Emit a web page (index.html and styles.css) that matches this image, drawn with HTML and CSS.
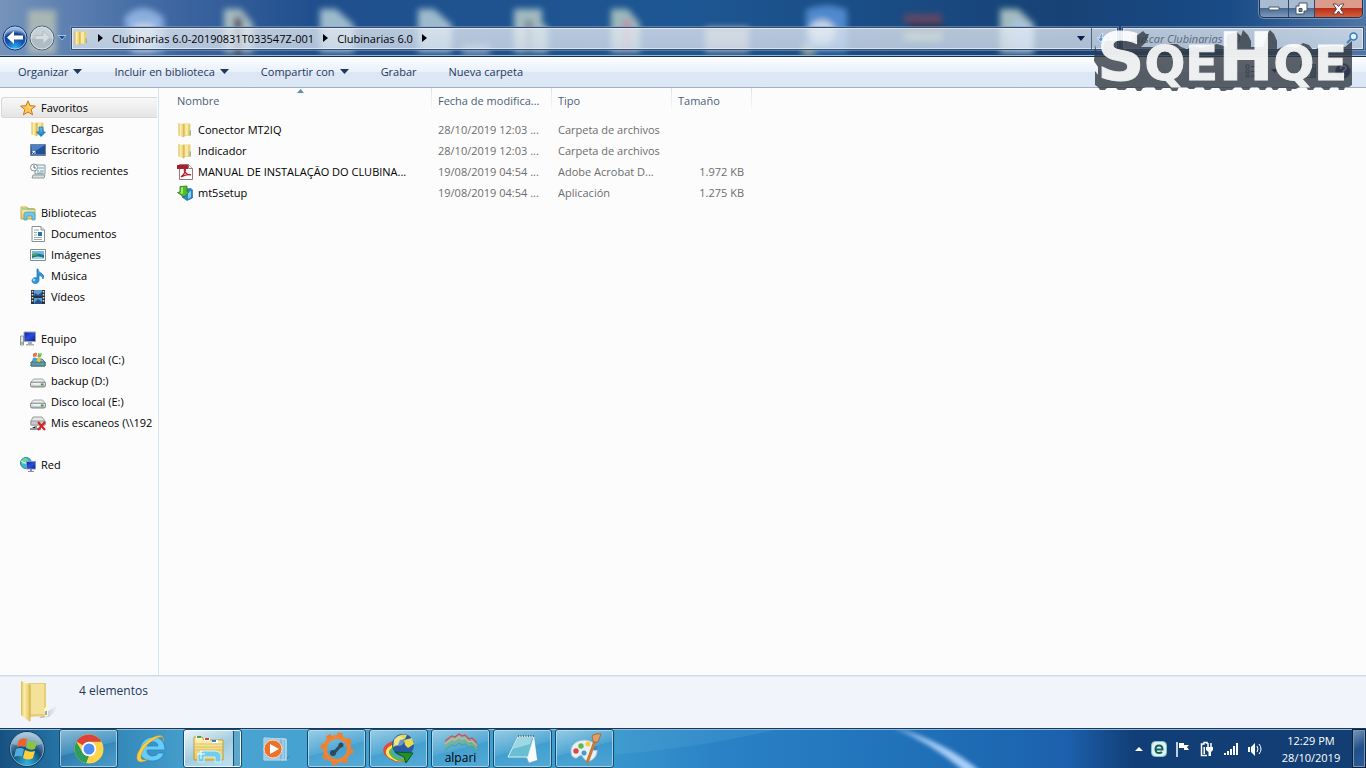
FILE: index.html
```html
<!DOCTYPE html>
<html lang="es">
<head>
<meta charset="utf-8">
<title>Clubinarias 6.0</title>
<link rel="stylesheet" href="styles.css">
</head>
<body>
<svg class="defs" aria-hidden="true">
  <defs>
    <linearGradient id="gold" x1="0" x2="1"><stop offset="0" stop-color="#d9b74c"/><stop offset=".35" stop-color="#fbefb0"/><stop offset="1" stop-color="#e3c457"/></linearGradient>
    <linearGradient id="goldback" x1="0" x2="0" y1="0" y2="1"><stop offset="0" stop-color="#fff3b8"/><stop offset="1" stop-color="#e5c75c"/></linearGradient>
    <linearGradient id="blueArrow" x1="0" x2="0" y1="0" y2="1"><stop offset="0" stop-color="#62c3f2"/><stop offset="1" stop-color="#1178c4"/></linearGradient>
    <linearGradient id="screen" x1="0" x2="1" y1="0" y2="1"><stop offset="0" stop-color="#0a1fa8"/><stop offset=".5" stop-color="#2a4fe0"/><stop offset="1" stop-color="#0a1788"/></linearGradient>
    <linearGradient id="drivetop" x1="0" x2="0" y1="0" y2="1"><stop offset="0" stop-color="#f7f7f7"/><stop offset="1" stop-color="#b5b9bc"/></linearGradient>
  </defs>
  <symbol id="folder" viewBox="0 0 16 16">
    <path d="M6 1.500h7.500v12.500H6z" fill="#ead074"/>
    <path d="M7.500 2h3.500v11.500H7.500z" fill="#f8e9a4"/>
    <path d="M1.500 1l5.500 1v13.500l-5.500-2z" fill="url(#gold)"/>
    <path d="M7 2v13" stroke="#c9a53f" stroke-width=".7"/>
    <path d="M12.500 9v4l1.500 .5V8z" fill="#8fb7a8"/>
  </symbol>
  <symbol id="drive" viewBox="0 0 16 16">
    <path d="M3.500 6h9L15.500 9.500H.5z" fill="#eceeee" stroke="#8d9295" stroke-width=".8"/>
    <rect x=".5" y="9.200" width="15" height="4.800" rx="1.500" fill="url(#drivetop)" stroke="#777d80" stroke-width=".9"/>
    <path d="M3 11h7" stroke="#fff"/><rect x="11" y="10.500" width="2.500" height="2" fill="#32a52d"/>
  </symbol>
  <symbol id="caret" viewBox="0 0 9 5"><path d="M0 0h9L4.500 5z" fill="#1e395b"/></symbol>
</svg>

<header class="titlebar">
  <svg class="glass" viewBox="0 0 1366 57" preserveAspectRatio="xMidYMin slice" aria-hidden="true">
    <defs>
      <linearGradient id="glassbg"><stop offset="0" stop-color="#7593bb"/><stop offset=".1" stop-color="#466da6"/><stop offset=".23" stop-color="#204f8d"/><stop offset=".5" stop-color="#1d5793"/><stop offset=".78" stop-color="#174276"/><stop offset=".9" stop-color="#194b86"/><stop offset="1" stop-color="#4f76a6"/></linearGradient>
      <filter id="soft" x="-5%" y="-30%" width="110%" height="160%"><feGaussianBlur stdDeviation="3"/></filter>
    </defs>
    <rect width="1366" height="57" fill="url(#glassbg)"/>
    <g filter="url(#soft)" opacity=".8">
      <path d="M28 10h28v44H28z" fill="#b9c2b4"/>
      <path d="M124 18q18-20 40 0v34h-34z" fill="#9cc0ec"/><path d="M134 24h20v28h-20z" fill="#eef4fc"/>
      <path d="M224 9h17l12 15v28h-29z" fill="#c6d5cb"/><path d="M234 17h8v38h-8z" fill="#5b4442"/>
      <path d="M320 9h16l18 16v27h-34z" fill="#bdd5dd"/>
      <path d="M418 9h16l18 16v27h-34z" fill="#bdd5dd"/><path d="M462 44h28v11h-28z" fill="#8eaac2"/>
      <path d="M514 9h28v14l6 5v24h-34z" fill="#c3d6cf"/><path d="M525 20h8v31h-8z" fill="#94978f"/>
      <path d="M611 9h17l12 15v28h-29z" fill="#bbd2c5"/><path d="M622 20h10v30h-10z" fill="#dda5b2"/>
      <path d="M705 27h44v25h-44z" fill="#bbb9bd"/>
      <path d="M806 10q20-9 41 0v42h-41z" fill="#5d99df"/><ellipse cx="822" cy="32" rx="13" ry="12" fill="#eff7ff"/><path d="M802 44h13v12h-13z" fill="#a8b79c"/>
      <path d="M904 14h38v9h-38z" fill="#75465d"/><path d="M909 24h34v7h-34z" fill="#152838"/><path d="M904 33h38v8h-38z" fill="#99ae8d"/>
      <path d="M1000 9h18l16 15v29h-34z" fill="#c5d9d0"/><path d="M1013 18l18 8v26h-18z" fill="#cee3fc"/>
    </g>
  </svg>
  <div class="caption">
    <button class="cap" aria-label="Minimizar"><svg width="12" height="5" viewBox="0 0 12 5"><path d="M1 1h10v3H1z" fill="#fff" stroke="#47566b"/></svg></button>
    <button class="cap cap-restore" aria-label="Restaurar"><svg width="13" height="13" viewBox="0 0 13 13"><path d="M4 1h8v8H9v3H1V4h3z" fill="#fff" stroke="#44546b"/><path d="M4 6.500h3v3H4z" fill="#6884a8" stroke="#44546b"/></svg></button>
    <button class="cap cap-close" aria-label="Cerrar"><svg width="13" height="12" viewBox="0 0 13 12"><path d="M1 1h3.500l2 2.500 2-2.500H12L8.500 6l3.500 5H8.500l-2-3-2 3H1l3.500-5z" fill="#fff" stroke="#644"/></svg></button>
  </div>
  <nav class="navrow">
    <button class="plain" aria-label="Atrás"><svg width="26" height="26" viewBox="0 0 26 26"><defs><radialGradient id="back" cx=".5" cy=".95" r=".8"><stop offset="0" stop-color="#32bdf4"/><stop offset=".5" stop-color="#1552b1"/><stop offset=".8" stop-color="#174593"/><stop offset="1" stop-color="#92b4df"/></radialGradient></defs><circle cx="13" cy="13" r="12" fill="url(#back)" stroke="#12356e"/><circle cx="13" cy="13" r="11" fill="none" stroke="#b7d5f1" opacity=".8"/><path d="M5 12.500L12 6v4.500h9v4h-9V19z" fill="#fff"/></svg></button>
    <button class="plain" aria-label="Adelante"><svg width="26" height="26" viewBox="0 0 26 26"><circle cx="13" cy="13" r="12" fill="#b3bdc8" fill-opacity=".75" stroke="#455e80"/><circle cx="13" cy="13" r="11" fill="none" stroke="#d8dfe6"/><path d="M2 13a11 11 0 0 1 22 0q-11 3-22 0" fill="#e7ebee" opacity=".45"/><path d="M21 12.500L14 6v4.500H6v4h8V19z" fill="#d5dce3" stroke="#aab4be" stroke-width=".7"/></svg></button>
    <button class="plain recent" aria-label="Páginas recientes"><svg width="10" height="6" viewBox="0 0 10 6"><path d="M1 .5h8L5 5z" fill="#244f87" stroke="#8fc8eb"/></svg></button>
    <div class="address">
      <svg width="16" height="16"><use href="#folder"/></svg>
      <svg class="sep" width="5" height="8" viewBox="0 0 5 8"><path d="M0 0l5 4-5 4z"/></svg>
      <button class="crumb">Clubinarias 6.0-20190831T033547Z-001</button>
      <svg class="sep" width="5" height="8" viewBox="0 0 5 8"><path d="M0 0l5 4-5 4z"/></svg>
      <button class="crumb">Clubinarias 6.0</button>
      <svg class="sep" width="5" height="8" viewBox="0 0 5 8"><path d="M0 0l5 4-5 4z"/></svg>
      <button class="plain drop" aria-label="Ubicaciones anteriores"><svg width="8" height="5" viewBox="0 0 8 5"><path d="M0 0h8L4 5z" fill="#081b50"/></svg></button>
      <button class="plain refresh" aria-label="Actualizar"><svg width="15" height="13" viewBox="0 0 15 13"><path d="M6 1Q2 2 3 6H0l4 4 3-4H5q0-3 1-5zM9 12q4-1 3-5h3l-4-4-3 4h2q0 3-1 5z" fill="#5d9bd2" stroke="#e4f2fd" stroke-width=".8"/></svg></button>
    </div>
    <label class="search"><input type="search" placeholder="Buscar Clubinarias 6.0" aria-label="Buscar Clubinarias 6.0"><svg width="12" height="12" viewBox="0 0 12 12"><circle cx="7.500" cy="4.500" r="3.500" fill="#e4f0fb" stroke="#337abb" stroke-width="1.500"/><path d="M5 7l-4 4" stroke="#3b80bd" stroke-width="2"/></svg></label>
  </nav>
</header>

<div class="toolbar">
  <button class="tool">Organizar <svg width="9" height="5"><use href="#caret"/></svg></button>
  <button class="tool">Incluir en biblioteca <svg width="9" height="5"><use href="#caret"/></svg></button>
  <button class="tool">Compartir con <svg width="9" height="5"><use href="#caret"/></svg></button>
  <button class="tool">Grabar</button>
  <button class="tool">Nueva carpeta</button>
  <div class="tool-right">
    <button class="plain" aria-label="Cambiar la vista"><svg width="16" height="14" viewBox="0 0 16 14"><path d="M1 1h3v3H1zM1 6h3v3H1zM1 11h3v2H1z" fill="#fff" stroke="#51657e"/><path d="M6 2.500h4m1 0h4M6 7.500h4m1 0h4M6 12h4m1 0h4" stroke="#536579"/></svg></button>
    <button class="plain" aria-label="Más vistas"><svg width="7" height="4" viewBox="0 0 9 5"><use href="#caret"/></svg></button>
    <button class="plain preview" aria-label="Panel de vista previa"><svg width="16" height="14" viewBox="0 0 16 14"><path d="M.5.5h15v13H.5z" fill="#edf4f7" stroke="#546e84"/><path d="M10 3h5v10h-5z" fill="#668f9e"/><path d="M1 2h14" stroke="#7d98aa"/></svg></button>
    <button class="plain" aria-label="Ayuda"><svg width="16" height="16" viewBox="0 0 16 16"><circle cx="8" cy="8" r="7.500" fill="#1b2c8c" stroke="#8997b0"/><path d="M5.500 6q0-3 3-3 3 .2 2.500 2.500Q10 7 8.500 8v2" fill="none" stroke="#fff" stroke-width="1.700"/><path d="M7.500 11h2v2h-2z" fill="#fff"/></svg></button>
  </div>
</div>

<main class="content">
  <nav class="sidebar">
    <section class="group">
      <a class="head selected" href="#"><svg width="16" height="16" viewBox="0 0 16 16"><path d="M8 .8l2 4.900 5.400.4-4.200 3.400 1.400 5.300L8 12l-4.600 2.800 1.400-5.300L.6 6.100 6 5.700z" fill="#ffc951" stroke="#c8752c"/><path d="M8 3l1 4 3 .3-3 1" fill="#ffefa3"/></svg>Favoritos</a>
      <a href="#"><svg width="16" height="16" viewBox="0 0 16 16"><use href="#folder"/><path d="M9 6h4v5h2.500L11 15.500 6.500 11H9z" fill="url(#blueArrow)" stroke="#126ba7" stroke-width=".7"/></svg>Descargas</a>
      <a href="#"><svg width="16" height="16" viewBox="0 0 16 16"><path d="M.5 2.500h15v11H.5z" fill="#234f99" stroke="#728098"/><path d="M1 3h14L2 11z" fill="#4a81c9"/><path d="M1 12h14v1.500H1z" fill="#5a789f"/><path d="M2 12l3-3M2.500 9.500H5V12" fill="none" stroke="#fff" stroke-width=".8"/></svg>Escritorio</a>
      <a href="#"><svg width="16" height="16" viewBox="0 0 16 16"><path d="M5 2h10v9H5z" fill="#eff4f6" stroke="#879497"/><path d="M8 5h6M7 8h2m1 0h4M7 10h6" stroke="#6e9dba"/><path d="M3 12h12l-1 3H2z" fill="#dce1e1" stroke="#949b9d"/><circle cx="4" cy="4.500" r="3.500" fill="#fff" stroke="#829198"/><path d="M4 2v3h2" fill="none" stroke="#536d84"/></svg>Sitios recientes</a>
    </section>
    <section class="group">
      <a class="head" href="#"><svg width="16" height="16" viewBox="0 0 16 16"><path d="M1 2h6l1 2h7v10H1z" fill="url(#goldback)" stroke="#c8a849"/><path d="M2 4h12" stroke="#6db172"/><path d="M4 9q0-2 3-2h6q2 0 2 2v6h-3v-4H7v4H4z" fill="#6dc7ea" stroke="#4698bc" stroke-width=".7"/></svg>Bibliotecas</a>
      <a href="#"><svg width="16" height="16" viewBox="0 0 16 16"><path d="M2 .5h9L14.500 4v11.500H2z" fill="#fff" stroke="#86929a"/><path d="M11 .5V4h3.500" fill="#dde4e8" stroke="#86929a"/><path d="M4 4h5M4 6.500h3M4 9h3M4 11.500h8M4 13.500h8" stroke="#9ba9b1"/><path d="M8 6h4v4H8z" fill="#2b71a6"/></svg>Documentos</a>
      <a href="#"><svg width="16" height="16" viewBox="0 0 16 16"><path d="M.5 2.500h15v11H.5z" fill="#fff" stroke="#7e8d98"/><path d="M2 4h12v8H2z" fill="#6db9e5"/><path d="M2 8q4-3 12 0v4H2z" fill="#247687"/><path d="M2 7l4-1 2 2-6 1z" fill="#4da26e"/><path d="M2 11q6-3 12 0v1H2z" fill="#9fd5e9"/></svg>Imágenes</a>
      <a href="#"><svg width="16" height="16" viewBox="0 0 16 16"><path d="M8 1q0 3 3 4 4 2 2 6 0-3-4-4v5c0 5-7 4-7 1 0-3 3-4 5-3V1z" fill="#2c97df" stroke="#186fae" stroke-width=".7"/><circle cx="4" cy="12" r="1.200" fill="#9dddff"/></svg>Música</a>
      <a href="#"><svg width="16" height="16" viewBox="0 0 16 16"><path d="M1 1h14v14H1z" fill="#28333d"/><path d="M4 1h8v6H4zM4 9h8v6H4z" fill="#5c9fd0"/><path d="M5 4l3 2 4-3v4H4zM5 13l3-3 4 3v2H4z" fill="#274f8a"/><path d="M2.500 2v12M13.500 2v12" stroke="#dce6ea" stroke-width="1.500" stroke-dasharray="1.500 1.500"/></svg>Vídeos</a>
    </section>
    <section class="group">
      <a class="head" href="#"><svg width="16" height="16" viewBox="0 0 16 16"><path d="M4 1h11.500v9.500H4z" fill="url(#screen)" stroke="#a3a7a9"/><path d="M8 11h4v2h2v1.500H6V13h2z" fill="#a5adb1"/><path d="M.5 5h3v9H.5z" fill="#e2e5e5" stroke="#8d9698"/><path d="M1.500 11h1v2h-1z" fill="#27a33d"/></svg>Equipo</a>
      <a href="#"><svg width="16" height="16" viewBox="0 0 16 16"><path d="M2 10L4 7h8l3 3v4H1z" fill="#89b1c2" stroke="#46788e"/><path d="M1 10h14v4H1z" fill="#5e99ab" stroke="#486d77"/><path d="M3 2q2-2 4-1L6.500 5Q5 4 3 5z" fill="#f07336"/><path d="M8 1q2 1 4 0l-1 4q-2 1-3.500 0z" fill="#79b952"/><path d="M3 6q2-1 3.500 0L6 9Q4 8 2 9z" fill="#439edd"/><path d="M7.500 6q2 1 3.500 0l-1 4q-2 0-3-1z" fill="#f4c936"/><path d="M12 11h1v2h-1z" fill="#1de44c"/></svg>Disco local (C:)</a>
      <a href="#"><svg width="16" height="16"><use href="#drive"/></svg>backup (D:)</a>
      <a href="#"><svg width="16" height="16"><use href="#drive"/></svg>Disco local (E:)</a>
      <a href="#"><svg width="16" height="16" viewBox="0 0 16 16"><path d="M3 2h9l3 4v4H1V6z" fill="#e4e7e7" stroke="#989d9f"/><path d="M1 6h14v4H1z" fill="#c6cacc" stroke="#949a9b"/><path d="M6 11v3H0m6 0h5" stroke="#899" stroke-width="2"/><path d="M8 7l7 8m0-8l-7 8" stroke="#d72424" stroke-width="2.200"/></svg>Mis escaneos (\\192</a>
    </section>
    <section class="group">
      <a class="head" href="#"><svg width="16" height="16" viewBox="0 0 16 16"><circle cx="6" cy="6" r="5.500" fill="#3db8c3" stroke="#2986aa"/><path d="M2 3q4-4 6 0L6 7H2zM6 8l4 1-3 2z" fill="#6fd69b"/><path d="M1 4q6 4 9 1" fill="none" stroke="#d7f9fa"/><path d="M6.500 4.500h9v7.500h-9z" fill="url(#screen)" stroke="#8795ad"/><path d="M10 12h2v2h2v1H8v-1h2z" fill="#7d95ae"/></svg>Red</a>
    </section>
  </nav>

  <div class="files">
    <table>
      <colgroup><col class="c-name"><col class="c-date"><col class="c-type"><col class="c-size"></colgroup>
      <thead><tr><th class="sorted" aria-sort="ascending"><svg width="7" height="4" viewBox="0 0 7 4" aria-hidden="true"><path d="M0 4l3.500-4L7 4z" fill="#5b8fab"/></svg>Nombre</th><th>Fecha de modifica...</th><th>Tipo</th><th>Tamaño</th></tr></thead>
      <tbody>
        <tr><td><span class="file"><svg width="16" height="16"><use href="#folder"/></svg>Conector MT2IQ</span></td><td>28/10/2019 12:03 ...</td><td>Carpeta de archivos</td><td></td></tr>
        <tr><td><span class="file"><svg width="16" height="16"><use href="#folder"/></svg>Indicador</span></td><td>28/10/2019 12:03 ...</td><td>Carpeta de archivos</td><td></td></tr>
        <tr><td><span class="file"><svg width="16" height="16" viewBox="0 0 16 16"><path d="M2.500.5h9l4 4v11h-13z" fill="#fff" stroke="#9b7779"/><path d="M11.500.5v4h4" fill="#eee" stroke="#9b7779"/><path d="M0 1h11v4H0z" fill="#aa1e29"/><path d="M4 13c4-3 5-7 4-8-2 0 0 6 6 6-3-1-6 0-10 2z" fill="none" stroke="#b51f2a" stroke-width="1.300"/></svg>MANUAL DE INSTALAÇÃO DO CLUBINA...</span></td><td>19/08/2019 04:54 ...</td><td>Adobe Acrobat D...</td><td>1.972 KB</td></tr>
        <tr><td><span class="file"><svg width="16" height="16" viewBox="0 0 16 16"><path d="M7 4l7-.5 1.500 1.500v8L10 15.500 5 12z" fill="#2687cb" stroke="#1c648f" stroke-width=".6"/><path d="M11 7l3-1v6l-3 2z" fill="#82cbea"/><path d="M3 1.500L10 1v5.500l2 .5-5 5-6.500-4.500L3 7z" fill="#55bb27" stroke="#287c21" stroke-width=".8"/><path d="M4 2.500l2-.2V8L5 9 2.500 7.500H4z" fill="#a6e76a"/></svg>mt5setup</span></td><td>19/08/2019 04:54 ...</td><td>Aplicación</td><td>1.275 KB</td></tr>
      </tbody>
    </table>
  </div>
</main>

<footer class="details">
  <svg width="40" height="44" viewBox="0 0 40 44"><defs><linearGradient id="shade"><stop offset="0" stop-color="#777" stop-opacity=".6"/><stop offset="1" stop-color="#888" stop-opacity="0"/></linearGradient></defs><path d="M20 38l18-13q2 4-8 12z" fill="url(#shade)"/><path d="M9 3h18v33l-17 1z" fill="#e8cf77"/><path d="M12 4h13v30H12z" fill="#f4e29b"/><path d="M2 1l9 4v37l-9-7z" fill="url(#gold)"/><path d="M11 5v36" stroke="#c8aa4c" stroke-width=".8"/><path d="M25 29l4-5v12l-3 1z" fill="#fff8cf"/><path d="M27 31v4" stroke="#649eaa" stroke-width="1.500"/></svg>
  <p>4 elementos</p>
</footer>

<footer class="taskbar">
  <svg class="beam" viewBox="0 0 440 40" preserveAspectRatio="none" aria-hidden="true"><defs><filter id="beamblur"><feGaussianBlur stdDeviation="2"/></filter></defs><path d="M0 0h160Q90 18 0 26z" fill="#6bb6df" opacity=".18"/><path d="M278-4Q336 14 368 44h-16Q320 14 278-4z" fill="#a9cff8" filter="url(#beamblur)"/></svg>
  <button class="plain orb" aria-label="Inicio"><svg width="38" height="38" viewBox="0 0 38 38"><defs><radialGradient id="orb" cx=".5" cy=".9" r=".9"><stop offset="0" stop-color="#2cb5df"/><stop offset=".5" stop-color="#154b78"/><stop offset="1" stop-color="#a4c5db"/></radialGradient></defs><circle cx="19" cy="19" r="17.500" fill="url(#orb)" stroke="#163b5b"/><path d="M4 14a15.500 15.500 0 0 1 30 0q-15 6-30 0" fill="#d4e9f4" opacity=".4"/><circle cx="19" cy="19" r="16.500" fill="none" stroke="#9dc4d9" opacity=".7"/><path d="M11 10q4-3 8-1l-2 8q-4-2-8 0z" fill="#ee632d"/><path d="M20 10q5 3 9 1l-2 8q-4 2-9-1z" fill="#8ac345"/><path d="M8 19q4-2 8 0l-2 8q-3-2-8 0z" fill="#4eacdf"/><path d="M17 20q5 3 10 1l-2 7q-5 3-10 0z" fill="#ffcf3c"/></svg></button>
  <div class="apps">
    <button class="app framed" aria-label="Google Chrome"><svg width="32" height="32" viewBox="0 0 32 32"><circle cx="16" cy="16" r="14.500" fill="#ffd449"/><path d="M16 16L3.500 8.500A14.500 14.500 0 0 1 28.600 8.800H16z" fill="#db4437"/><path d="M3.400 8.800L10 20q2 3 6 3l-3 7.200A14.500 14.500 0 0 1 3.400 8.800z" fill="#2b9e5c"/><circle cx="16" cy="16" r="7.300" fill="#fff"/><circle cx="16" cy="16" r="5.500" fill="#4e8df2"/></svg></button>
    <button class="app" aria-label="Internet Explorer"><svg width="32" height="32" viewBox="0 0 32 32"><path d="M30 17H12q0 6 6 6 4 0 5-3h6c-2 6-7 8-12 8C9 28 4 23 5 16 6 9 11 4 18 4c8 0 12 6 12 13zM12 13h11q-1-5-6-4-4 0-5 4z" fill="#67cdf8" stroke="#1f83c8" stroke-width=".7"/><path d="M28 9q2-8-6-6C12 5 1 18 2 26q2 6 12 0-9 3-8-3C7 15 17 6 25 4q4-1 3 5z" fill="#f8cf43" stroke="#ca992a" stroke-width=".5"/></svg></button>
    <button class="app framed active" aria-label="Explorador de Windows"><svg width="34" height="34" viewBox="0 0 34 34"><path d="M2 5h8l2 3h19v20H2z" fill="url(#goldback)" stroke="#c29b36"/><path d="M4 4h5v3H4zM12 6h6v3h-6zM20 8h6v3h-6z" fill="#fff"/><path d="M5 4h4v2H5z" fill="#42a442"/><path d="M13 6h4v2h-4z" fill="#d9432f"/><path d="M20 8h4v2h-4z" fill="#3b85bf"/><path d="M3 12h28M3 15h28M3 18h28" stroke="#cbab4b" stroke-width=".6"/><path d="M6 30V23q1-4 6-4h11q5 0 6 4v7h-6v-5H12v5z" fill="#73cceb" stroke="#d5f3fc"/><path d="M9 18v9M5 22h8" stroke="#fff"/></svg></button>
    <button class="app" aria-label="Reproductor de Windows Media"><svg width="32" height="28" viewBox="0 0 32 28"><path d="M24 25l8-5-6 6z" fill="#31516a" opacity=".4"/><path d="M5 3l22 1v21H5z" fill="#83bad8" stroke="#c6e3f2"/><path d="M24 3v23M27 4v22" stroke="#bbdcf0"/><path d="M5 3h16v22H5z" fill="#a4cfe5" opacity=".8"/><circle cx="14" cy="14" r="9" fill="#ec712b" stroke="#fbd7b7"/><path d="M11 9l9 5-9 5z" fill="#fff"/></svg></button>
    <button class="app framed" aria-label="Herramienta"><svg width="34" height="34" viewBox="0 0 34 34"><circle cx="17" cy="17" r="12" fill="none" stroke="#ee8434" stroke-width="4"/><circle cx="17" cy="17" r="14.500" fill="none" stroke="#e98135" stroke-width="4" stroke-dasharray="5 6.400"/><path d="M13 22l8-9" stroke="#334c5b" stroke-width="3"/><circle cx="13" cy="21" r="3" fill="#2d4a5c"/><circle cx="21" cy="13" r="2.500" fill="#2d4a5c"/></svg></button>
    <button class="app framed" aria-label="Internet Download Manager"><svg width="34" height="32" viewBox="0 0 34 32"><path d="M13 9Q-3 15 7 23t20 1" fill="none" stroke="#e5483d" stroke-width="4"/><path d="M13 12Q0 18 9 24t17 0" fill="none" stroke="#fce94e" stroke-width="3"/><path d="M13 15q-8 4-1 9t14 1" fill="none" stroke="#57b754" stroke-width="3"/><circle cx="21" cy="12" r="11" fill="#285aa5"/><path d="M12 7q6-7 13-5l-2 4-5 1-2 5-5 2zM22 7l8-2 2 6-6 4-3-3z" fill="#e5da52"/><circle cx="17" cy="8" r="5" fill="#fff" opacity=".35"/><path d="M13 19l18 1-7 10-2-6z" fill="#1c942b" stroke="#0c5a1c"/></svg></button>
    <button class="app framed alpari"><svg width="34" height="18" viewBox="0 0 34 18" aria-hidden="true"><g fill="none" stroke-width="1.200"><path d="M1 8l4-3 3-2 3 1 4-3 3 2 3-1 4 4 3-1 5 5" stroke="#db4846"/><path d="M1 11l4-3 3-2 3 1 4-3 3 2 3-1 4 4 3-1 5 5" stroke="#d9bb5c"/><path d="M1 14l4-3 3-2 3 1 4-3 3 2 3-1 4 4 3-1 5 5" stroke="#83b36e"/><path d="M1 17l4-3 3-2 3 1 4-3 3 2 3-1 4 4 3-1 5 5" stroke="#50a894"/></g></svg><span>alpari</span></button>
    <button class="app framed" aria-label="Bloc de notas"><svg width="34" height="32" viewBox="0 0 34 32"><path d="M11 3h17l3 24-8 3z" fill="#e9f3f6" stroke="#8eafb8" stroke-width=".7"/><path d="M12 4h16l-6 20H2z" fill="#69bfd1" stroke="#d9f1f4"/><path d="M12 5h14l-2 6-17 5z" fill="#b3e2ec" opacity=".7"/><path d="M22 25l6-20 3 22-8 2z" fill="#f7fbfc"/><path d="M12 3h17" stroke="#58717b" stroke-width="2" stroke-dasharray="1 1.500"/></svg></button>
    <button class="app framed" aria-label="Paint"><svg width="34" height="34" viewBox="0 0 34 34"><path d="M3 20C2 10 15 5 24 10c8 5 6 16-2 19-4 1-6-2-8-5-3-2-4 3-7 2-3-1-4-3-4-6z" fill="#e7f0f7" stroke="#a7b8c7"/><circle cx="8" cy="19" r="2.700" fill="#dc493f"/><circle cx="13" cy="14" r="2.700" fill="#62b74a"/><circle cx="20" cy="12" r="2.500" fill="#f1cf45"/><circle cx="27" cy="16" r="2.500" fill="#3788ce"/><circle cx="16" cy="21" r="2.500" fill="#479acb"/><path d="M19 31l8-22" stroke="#c57a36" stroke-width="3"/><path d="M26 10q-3-5-1-7 4-2 8-1l-3 8z" fill="#dca16b" stroke="#ad6a37"/></svg></button>
  </div>
  <div class="tray">
    <button class="plain" aria-label="Mostrar iconos ocultos"><svg width="8" height="4" viewBox="0 0 8 4"><path d="M0 4h8L4 0z" fill="#fff"/></svg></button>
    <button class="plain" aria-label="Antivirus"><svg width="16" height="16" viewBox="0 0 16 16"><rect x=".5" y=".5" width="15" height="15" rx="4" fill="#dff2f1" stroke="#83c3c4"/><path d="M4.500 8.500h7q0-4-3.500-4T4.500 8.300 8 12q2 0 3-1" fill="none" stroke="#17605f" stroke-width="2"/></svg></button>
    <button class="plain" aria-label="Centro de actividades"><svg width="16" height="16" viewBox="0 0 16 16"><path d="M2 1v15" stroke="#fff" stroke-width="1.500"/><path d="M4 2h5v2h5l-2 2 2 3H9V7H4z" fill="#fff"/></svg></button>
    <button class="plain" aria-label="Energía"><svg width="16" height="16" viewBox="0 0 16 16"><path d="M8 3V1.500H5V3H2.500v11.500H8" fill="none" stroke="#fff" stroke-width="1.500"/><path d="M4.500 6h1.500v7H4.500zM7 6h7v3l-2 2v4H9.500v-4L7 9z" fill="#fff"/><path d="M9 2v5M12 2v5" stroke="#fff" stroke-width="1.500"/></svg></button>
    <button class="plain" aria-label="Red"><svg width="16" height="16" viewBox="0 0 16 16"><path d="M1 12h2v2H1zM4 10h2v4H4zM7 8h2v6H7zM10 5h2v9h-2zM13 2h2v12h-2z" fill="#fff"/></svg></button>
    <button class="plain" aria-label="Volumen"><svg width="16" height="16" viewBox="0 0 16 16"><path d="M1 6h2v5H1zM4 6l4-4v13l-4-4z" fill="#fff"/><path d="M10 5q2 3 0 6M12 3q4 5 0 10" fill="none" stroke="#fff"/></svg></button>
  </div>
  <button class="clock"><span>12:29 PM</span><span>28/10/2019</span></button>
  <button class="desktop" aria-label="Mostrar escritorio"></button>
</footer>

<svg class="watermark" width="262" height="64" viewBox="0 0 262 64" role="img" aria-label="SQEHQE">
  <path d="M2 16L4 24L8 26L12 12H42V8L50 2L53 5H56L53 13L48 18H60L70 15L84 15L88 18L94 20L100 17L108 19L124 15L134 18V6L144 3L148 7L150 1L155 6L158 12V18H170L174 6L177 1L181 5L184 12V20L192 17L204 19L210 14L216 16L220 21L228 18L242 17L252 18L259 12V56L256 58H252L251 61H246L245 58H238L236 61H231L228 58H222L220 61H215L213 58H206L203 60H199L198 62H194L193 59H186L184 61H180L178 58H174L172 61H167L165 58H158L156 61H150L148 58H142L139 61H134L132 62H128L126 59H119L117 61H112L110 58H103L101 60H96L94 58H86L84 62H79L77 59H70L68 61H63L61 58H53L50 59L48 62H44L42 59H34L32 61H25L23 59H14L12 61H7L5 58L2 56V42L5 46V38L1 32Z" fill="#333a42" opacity=".8"/>
  <text x="4" y="51"><tspan class="big">S</tspan>QE<tspan class="big">H</tspan>QE</text>
</svg>
</body>
</html>
```
FILE: styles.css
```css
* { box-sizing: border-box; }
body {
  margin: 0;
  min-height: 100vh;
  display: flex;
  flex-direction: column;
  position: relative;
  overflow-x: hidden;
  background: #fcfcfc;
  color: #000;
  font: 12px/21px "Open Sans", "Noto Sans", sans-serif;
}
button, input { font: inherit; color: inherit; }
button { border: 0; padding: 0; background: none; }
svg { flex: none; display: block; }
a { color: inherit; text-decoration: none; }
.defs { position: absolute; width: 0; height: 0; }
.plain { display: flex; align-items: center; justify-content: center; }

/* Window frame */
.titlebar {
  position: relative;
  height: 57px;
  padding: 25px 2px 0;
  border-bottom: 1px solid #142f54;
  box-shadow: inset 0 -1px #9cb4ce;
}
.glass { position: absolute; inset: 0; width: 100%; height: 55px; }
.caption {
  position: absolute;
  top: 0;
  right: 3px;
  display: flex;
  height: 18px;
  border: 1px solid #1e3354;
  border-top: 0;
  border-radius: 0 0 5px 5px;
  box-shadow: 0 0 0 1px #9fb5cd99;
  overflow: hidden;
}
.cap {
  width: 29px;
  display: flex;
  align-items: center;
  justify-content: center;
  border-right: 1px solid #30486a;
  background: linear-gradient(#a9bbd0 0 45%, #4a6a92 50%, #7e9abc);
}
.cap-restore { width: 26px; }
.cap-close { width: 47px; border: 0; background: linear-gradient(#dc9c8c 0 45%, #b8301b 50%, #d5603b); }
.navrow { position: relative; display: flex; align-items: center; gap: 1px; }
.recent { width: 12px; }
.address, .search {
  height: 23px;
  display: flex;
  align-items: center;
  border: 1px solid #344f73;
  outline: 1px solid #8ba4bf88;
  background: linear-gradient(#e5ebf3c4, #d7e1edc4);
  box-shadow: inset 0 0 0 1px #f0f5faaa;
}
.address { flex: 1; margin-left: 2px; padding-left: 1px; font-size: 11px; }
.sep { margin: 0 9px; }
.drop { margin-left: auto; width: 20px; }
.refresh { width: 26px; height: 21px; border-left: 1px solid #4a6485; }
.search { width: 242px; margin-left: 3px; padding: 0 5px 0 8px; }
.search input {
  flex: 1;
  min-width: 0;
  border: 0;
  outline: 0;
  padding: 0;
  background: none;
  font-size: 11px;
  font-style: italic;
}
.search input::placeholder { color: #5d6775; opacity: 1; }

/* Command bar */
.toolbar {
  height: 31px;
  display: flex;
  align-items: center;
  padding: 0 15px 2px 2px;
  border-bottom: 1px solid #a0afc3;
  background: linear-gradient(#fdfeff, #e8f0fb 50%, #dce6f4 50%, #dde8f6);
  color: #1e395b;
  font-size: 11px;
}
.tool { display: flex; align-items: center; gap: 5px; padding: 0 16px; }
.tool-right { margin-left: auto; display: flex; align-items: center; gap: 10px; }
.preview { margin: 0 9px 0 12px; }

/* Panes */
.content { flex: 1; display: flex; }
.sidebar {
  width: 159px;
  flex: none;
  padding: 9px 1px 0;
  border-right: 1px solid #d6e5f5;
  overflow: hidden;
  font-size: 11px;
}
.group { margin-bottom: 21px; }
.group a {
  height: 21px;
  display: flex;
  align-items: center;
  gap: 5px;
  padding-left: 29px;
  white-space: nowrap;
}
.group .head { padding-left: 19px; }
.group .selected {
  padding-left: 18px;
  border: 1px solid #d9d9d9;
  border-right: 0;
  border-radius: 3px 0 0 3px;
  background: linear-gradient(#f8f8f8, #e5e5e5);
}
.files { flex: 1; min-width: 0; }
table { width: 593px; table-layout: fixed; border-collapse: separate; border-spacing: 0; font-size: 11px; }
.c-name { width: 273px; }
.c-date, .c-type { width: 120px; }
.c-size { width: 80px; }
th, td { padding: 0 6px; text-align: left; font-weight: 400; white-space: nowrap; }
th {
  position: relative;
  height: 25px;
  color: #4c607a;
  background: linear-gradient(#d8e3f0, #fcfcfc) right / 1px 100% no-repeat;
}
th:first-child, td:first-child { padding-left: 18px; }
.sorted svg { position: absolute; top: 1px; left: 138px; }
tbody::before { content: ""; display: block; height: 6px; }
td { height: 21px; color: #6d6d6d; }
td:first-child { color: #000; }
td:last-child { text-align: right; padding-right: 8px; }
.file { display: flex; align-items: center; gap: 5px; }

/* Details pane */
.details {
  height: 53px;
  display: flex;
  gap: 20px;
  padding: 4px 19px;
  border-top: 1px solid #cddaea;
  box-shadow: inset 0 1px #e2e9f3;
  background: #f1f5fb;
  color: #1e395b;
}
.details p { margin: 0; }

/* Taskbar */
.taskbar {
  position: relative;
  height: 40px;
  display: flex;
  border-top: 1px solid #173a5c;
  box-shadow: inset 0 1px #91b9d7;
  background: linear-gradient(90deg, #175181, #2779ab 5%, #4aa4d1 15%, #3c9dce 42%, #2a81c6 53%, #2072b9 66%, #1c61ad 78%, #123e77 83%, #123e73);
}
.beam { position: absolute; left: 45%; width: 32%; height: 38px; top: 1px; overflow: hidden; }
.orb { width: 38px; margin: 0 13px 0 8px; }
.apps { display: flex; gap: 3px; }
.app { position: relative; width: 59px; display: flex; flex-direction: column; align-items: center; justify-content: center; }
.framed {
  border: 1px solid #174b70;
  border-radius: 3px;
  box-shadow: inset 0 0 0 1px #bfe1f1bb;
  background: linear-gradient(165deg, #d1e9f399, #73b9dd55 50%, #51a5d322 51%, #73bbe066);
}
.active {
  background: linear-gradient(155deg, #edf5f8, #a2cde0 50%, #c6e5f0);
  box-shadow: inset 0 0 0 1px #eff9ff, inset -7px 0 #5ca7ca, inset -8px 0 #174b70;
  padding-right: 8px;
}
.alpari span { font-size: 12px; line-height: 14px; }
.tray { margin-left: auto; display: flex; align-items: center; gap: 8px; }
.clock {
  width: 82px;
  display: flex;
  flex-direction: column;
  justify-content: center;
  align-items: center;
  margin-left: 7px;
  color: #fff;
  font-size: 11px;
  line-height: 17px;
}
.desktop { width: 14px; border: 1px solid #091f3d; box-shadow: inset 0 0 0 1px #7294b5; background: linear-gradient(150deg, #7798b8, #20508a 50%, #2a5c93); }

/* Logo laid over the window */
.watermark { position: absolute; top: 29px; right: 11px; pointer-events: none; }
.watermark text {
  fill: #fff;
  stroke: #fff;
  stroke-width: 1px;
  opacity: .9;
  font-family: "DejaVu Sans", sans-serif;
  font-weight: 700;
  font-size: 48px;
}
.watermark .big { font-size: 66px; }
```
